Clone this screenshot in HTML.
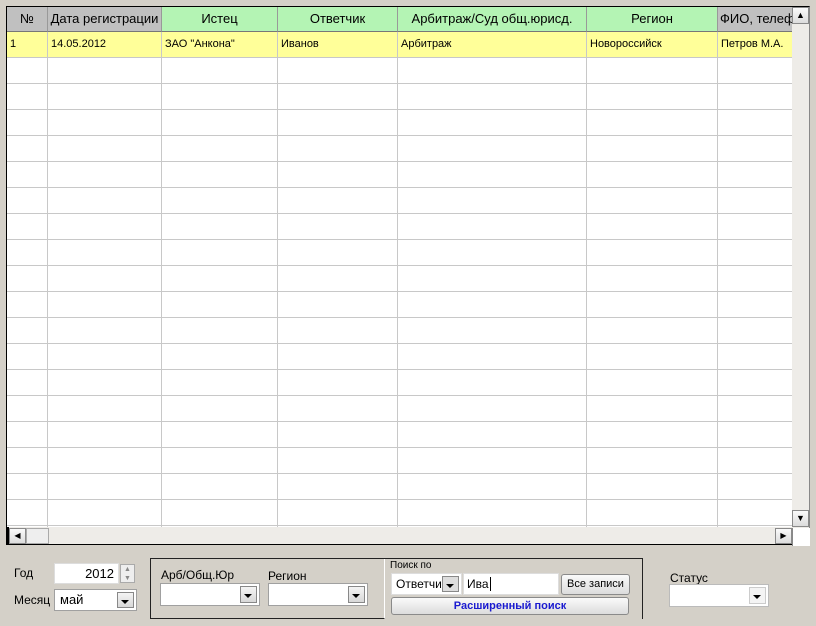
<!DOCTYPE html>
<html><head><style>
body{margin:0;width:816px;height:626px;background:#d4d0c8;font-family:"Liberation Sans",Arial,sans-serif;position:relative;overflow:hidden}
.a{position:absolute;box-sizing:border-box}
.grid{left:6px;top:6px;width:786px;height:521px;background:#fff;border-left:1px solid #000;border-top:1px solid #000}
.h{top:0;height:25px;font-size:13px;text-align:center;line-height:24px;border-right:1px solid #999;border-bottom:1px solid #777;white-space:nowrap;overflow:hidden}
.c{font-size:11px;line-height:25px;padding-left:3px;white-space:nowrap;overflow:hidden}
.lbl{font-size:12px;color:#000}
.sel{background:#fff;border:1px solid #a0a0a0}
.arr{position:absolute;right:2px;top:2px;width:15px;bottom:2px;border:1px solid #888;background:linear-gradient(#f4f4f4,#d8d8d8)}
.arr:after{content:"";position:absolute;left:3px;top:7px;border:4px solid transparent;border-top:4px solid #000}
.btn{border:1px solid #8a8a8a;border-radius:3px;background:linear-gradient(#fafafa,#dcdcdc);font-size:11px;text-align:center}
</style></head><body>
<div class="a grid">
<div class="a" style="left:0;top:25px;width:785px;height:26px;background:#ffff99"></div>
<svg class="a" width="786" height="521" style="left:0;top:0">
<g stroke="#c8c8c8" stroke-width="1">
<line x1="0" x2="786" y1="50.5" y2="50.5"/><line x1="0" x2="786" y1="76.5" y2="76.5"/><line x1="0" x2="786" y1="102.5" y2="102.5"/><line x1="0" x2="786" y1="128.5" y2="128.5"/><line x1="0" x2="786" y1="154.5" y2="154.5"/><line x1="0" x2="786" y1="180.5" y2="180.5"/><line x1="0" x2="786" y1="206.5" y2="206.5"/><line x1="0" x2="786" y1="232.5" y2="232.5"/><line x1="0" x2="786" y1="258.5" y2="258.5"/><line x1="0" x2="786" y1="284.5" y2="284.5"/><line x1="0" x2="786" y1="310.5" y2="310.5"/><line x1="0" x2="786" y1="336.5" y2="336.5"/><line x1="0" x2="786" y1="362.5" y2="362.5"/><line x1="0" x2="786" y1="388.5" y2="388.5"/><line x1="0" x2="786" y1="414.5" y2="414.5"/><line x1="0" x2="786" y1="440.5" y2="440.5"/><line x1="0" x2="786" y1="466.5" y2="466.5"/><line x1="0" x2="786" y1="492.5" y2="492.5"/><line x1="0" x2="786" y1="518.5" y2="518.5"/>
<line y1="25" y2="521" x1="40.5" x2="40.5"/><line y1="25" y2="521" x1="154.5" x2="154.5"/><line y1="25" y2="521" x1="270.5" x2="270.5"/><line y1="25" y2="521" x1="390.5" x2="390.5"/><line y1="25" y2="521" x1="579.5" x2="579.5"/><line y1="25" y2="521" x1="710.5" x2="710.5"/>
</g></svg>
<div class="a h" style="left:0;width:41px;background:#c0c0c0">№</div>
<div class="a h" style="left:41px;width:114px;background:#c0c0c0">Дата регистрации</div>
<div class="a h" style="left:155px;width:116px;background:#b4f4b4">Истец</div>
<div class="a h" style="left:271px;width:120px;background:#b4f4b4">Ответчик</div>
<div class="a h" style="left:391px;width:189px;background:#b4f4b4">Арбитраж/Суд общ.юрисд.</div>
<div class="a h" style="left:580px;width:131px;background:#b4f4b4">Регион</div>
<div class="a h" style="left:711px;width:75px;background:#c0c0c0;text-align:left;padding-left:2px">ФИО, телефон</div>
<div class="a c" style="left:0;top:25px;width:41px">1</div>
<div class="a c" style="left:41px;top:25px">14.05.2012</div>
<div class="a c" style="left:155px;top:25px">ЗАО "Анкона"</div>
<div class="a c" style="left:271px;top:25px">Иванов</div>
<div class="a c" style="left:391px;top:25px">Арбитраж</div>
<div class="a c" style="left:580px;top:25px">Новороссийск</div>
<div class="a c" style="left:711px;top:25px">Петров М.А.</div>
</div>
<!-- vertical scrollbar -->
<div class="a" style="left:792px;top:6px;width:18px;height:522px;background:#eeece8;border-top:1px solid #000;border-right:1px solid #888"></div>
<div class="a btn" style="left:792px;top:7px;width:17px;height:17px;border-radius:0;font-size:9px;line-height:15px">▲</div>
<div class="a btn" style="left:792px;top:510px;width:17px;height:17px;border-radius:0;font-size:9px;line-height:15px">▼</div>
<!-- horizontal scrollbar -->
<div class="a" style="left:6px;top:527px;width:786px;height:18px;background:#eeece8;border-left:3px solid #000;border-bottom:1px solid #000"></div>
<div class="a btn" style="left:9px;top:528px;width:17px;height:16px;border-radius:0;font-size:8px;line-height:14px">◀</div>
<div class="a" style="left:26px;top:528px;width:23px;height:16px;background:#eee;border:1px solid #aaa"></div>
<div class="a btn" style="left:775px;top:528px;width:17px;height:16px;border-radius:0;font-size:8px;line-height:14px">▶</div>
<div class="a" style="left:792px;top:528px;width:18px;height:18px;background:#fff;border-left:1px solid #888"></div>
<!-- bottom -->
<div class="a lbl" style="left:14px;top:566px">Год</div>
<div class="a sel" style="left:54px;top:563px;width:65px;height:21px;font-size:13px;text-align:right;padding-right:4px;line-height:19px;border-color:#ddd">2012</div>
<div class="a" style="left:120px;top:564px;width:15px;height:19px;border:1px solid #aaa;background:#eee;font-size:7px;color:#888;text-align:center;line-height:9px">▲<br>▼</div>
<div class="a lbl" style="left:14px;top:593px">Месяц</div>
<div class="a sel" style="left:54px;top:589px;width:83px;height:22px;font-size:13px;padding-left:5px;line-height:20px">май<div class="arr"></div></div>
<div class="a" style="left:150px;top:558px;width:235px;height:61px;border:1px solid #222;border-right:1px solid #fff"></div>
<div class="a lbl" style="left:161px;top:568px">Арб/Общ.Юр</div>
<div class="a lbl" style="left:268px;top:569px">Регион</div>
<div class="a sel" style="left:160px;top:583px;width:100px;height:23px"><div class="arr"></div></div>
<div class="a sel" style="left:268px;top:583px;width:100px;height:23px"><div class="arr"></div></div>
<div class="a" style="left:384px;top:558px;width:259px;height:61px;border-top:1px solid #222;border-right:1px solid #222"></div>
<div class="a" style="left:390px;top:560px;font-size:10px">Поиск по</div>
<div class="a sel" style="left:391px;top:573px;width:71px;height:22px;font-size:12px;padding-left:4px;line-height:20px;overflow:hidden;border-color:#ddd;white-space:nowrap">Ответчик<div class="arr" style="background:#ddd"></div></div>
<div class="a sel" style="left:463px;top:573px;width:96px;height:22px;font-size:12px;padding-left:3px;line-height:20px;border-color:#ddd">Ива<span style="border-left:1px solid #000;margin-left:1px"></span></div>
<div class="a btn" style="left:561px;top:574px;width:69px;height:21px;line-height:19px">Все записи</div>
<div class="a btn" style="left:391px;top:597px;width:238px;height:18px;line-height:16px;color:#1a1ad0;font-weight:bold">Расширенный поиск</div>
<div class="a lbl" style="left:670px;top:571px">Статус</div>
<div class="a sel" style="left:669px;top:584px;width:100px;height:23px;border-color:#bbb"><div class="arr" style="border-color:#ccc;background:#f4f4f4"></div></div>
</body></html>
